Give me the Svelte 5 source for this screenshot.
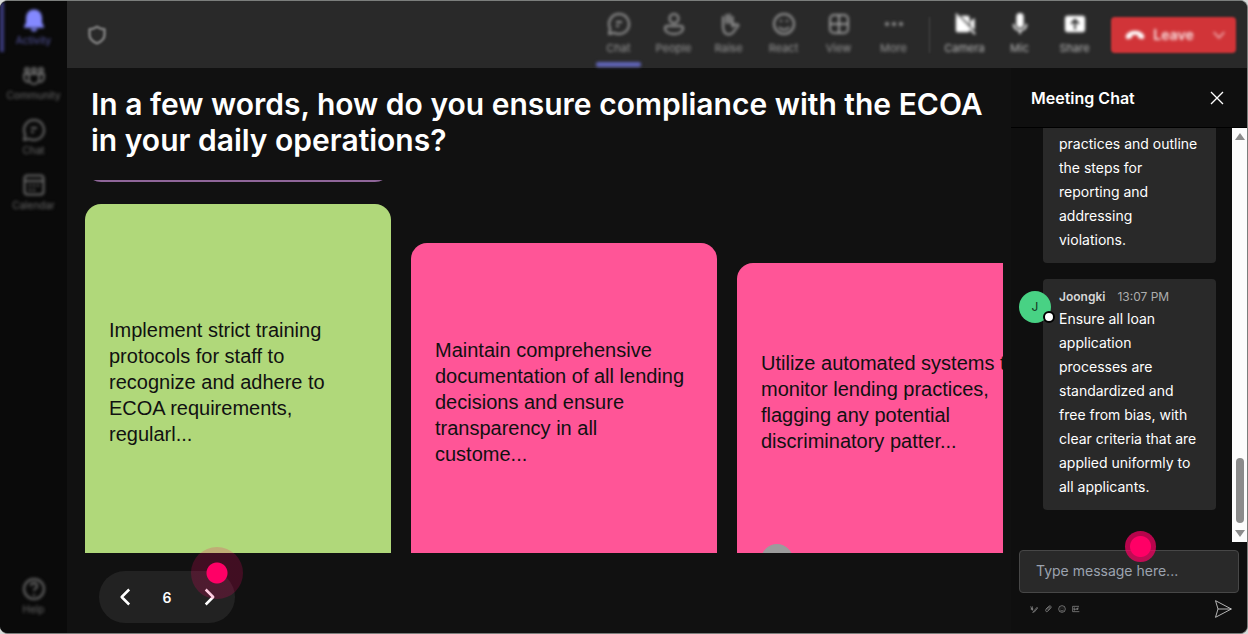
<script>
  const nav = [
    { id: 'bell', label: 'Activity', active: true },
    { id: 'community', label: 'Community' },
    { id: 'chat', label: 'Chat' },
    { id: 'calendar', label: 'Calendar' }
  ];
  const tools = [
    { id: 'chat', label: 'Chat', active: true },
    { id: 'person', label: 'People' },
    { id: 'hand', label: 'Raise' },
    { id: 'smile', label: 'React' },
    { id: 'grid', label: 'View' },
    { id: 'dots', label: 'More' }
  ];
  const devices = [
    { id: 'camera', label: 'Camera' },
    { id: 'mic', label: 'Mic' },
    { id: 'share', label: 'Share' }
  ];
  const columns = [
    {
      offset: 0, previous: true, color: '#b0d87a', height: 356,
      text: 'Implement strict training protocols for staff to recognize and adhere to ECOA requirements, regularl...'
    },
    {
      offset: 63, color: '#ff5597', height: 318,
      text: 'Maintain comprehensive documentation of all lending decisions and ensure transparency in all custome...'
    },
    {
      offset: 83, color: '#ff5597', height: 278,
      text: 'Utilize automated systems to monitor lending practices, flagging any potential discriminatory patter...'
    }
  ];
  let draft = $state('');
</script>

{#snippet icon(id)}
  <svg class="icon" viewBox="0 0 24 24" aria-hidden="true">
    {#if id === 'bell'}
      <path class="solid" d="M12 1.5a8 8 0 0 0-8 8v5l-2 4.2c-.2.6.1 1.1.8 1.1h18.4c.7 0 1-.5.8-1.1l-2-4.2v-5a8 8 0 0 0-8-8zM8.5 20.8a3.6 3.6 0 0 0 7 0z" />
    {:else if id === 'community'}
      <circle cx="12" cy="7" r="2" /><circle cx="5" cy="7" r="2" /><circle cx="19" cy="7" r="2" />
      <path d="M7 11h10v5a5 5 0 0 1-10 0zM7 11H2v4a4 4 0 0 0 5.3 3.5M17 11h5v4a4 4 0 0 1-5.3 3.5" />
    {:else if id === 'chat'}
      <path d="M12 2a10 10 0 1 1-4.7 18.8L2 22l1.2-5.3A10 10 0 0 1 12 2zM9 10h6M9 14h3" />
    {:else if id === 'calendar'}
      <rect x="2.5" y="2.5" width="19" height="19" rx="3" /><path d="M2.5 8h19M7 12.5h2M11 12.5h2M15 12.5h2M7 17h2M11 17h2" />
    {:else if id === 'person'}
      <circle cx="12" cy="6.500" r="4.500" /><path d="M5 14h14a2 2 0 0 1 2 2c0 4-4 6-9 6s-9-2-9-6a2 2 0 0 1 2-2z" />
    {:else if id === 'hand'}
      <path d="M6 15V5M9.500 11V3M12.500 11V2.500M15.500 12V5" stroke-linecap="round" />
      <path d="M6 13c0 6 1 9.500 5.500 9.500 3 0 4.500-1.500 6-4l4-5c-1-2-3-1.500-6 1V10" />
    {:else if id === 'smile'}
      <circle cx="12" cy="12" r="10" /><path d="M7 15c2.500 3.500 7.500 3.500 10 0M8 9h2M14 9h2" />
    {:else if id === 'grid'}
      <rect x="3" y="3" width="18" height="18" rx="4" /><path d="M12 3v18M3 12h18" />
    {:else if id === 'dots'}
      <circle class="solid" cx="5" cy="12" r="2" /><circle class="solid" cx="12" cy="12" r="2" /><circle class="solid" cx="19" cy="12" r="2" />
    {:else if id === 'camera'}
      <path class="solid" d="M3 3l14 14v2a2 2 0 0 1-2 2H4a2 2 0 0 1-2-2V5zM7 3h8a2 2 0 0 1 2 2v8zM18 9l4.500-3.500v13L18 15z" /><path d="M2 1l21 22" />
    {:else if id === 'mic'}
      <rect class="solid" x="8" y="0" width="8" height="16" rx="4" /><path d="M5 12a7 7 0 0 0 14 0M12 19v4" />
    {:else if id === 'share'}
      <path class="solid" fill-rule="evenodd" d="M4 3h16a3 3 0 0 1 3 3v12a3 3 0 0 1-3 3H4a3 3 0 0 1-3-3V6a3 3 0 0 1 3-3zm8 3l-5 5 1.500 1.500 2.500-2.500v8h2v-8l2.500 2.500L17 11z" />
    {:else if id === 'help'}
      <circle cx="12" cy="12" r="10" /><path d="M9 9a3 3 0 1 1 4.500 2.500c-1 .7-1.500 1.200-1.500 2.500M12 17v2" />
    {:else if id === 'shield'}
      <path d="M12 2c3 2 6 3 9 3v7c0 5-4 8-9 10-5-2-9-5-9-10V5c3 0 6-1 9-3z" />
    {:else if id === 'phone'}
      <path class="solid" d="M12 7c5 0 10 2.500 11 6 .5 2-.5 4-2 4l-4-1c-1-.3-1.500-1-1.500-2v-1.500c-2.500-.7-4.500-.7-7 0V14c0 1-.5 1.700-1.500 2l-4 1c-1.500 0-2.500-2-2-4C2 9.500 7 7 12 7z" />
    {:else if id === 'down'}
      <path d="M3 7l9 10 9-10" />
    {:else if id === 'left'}
      <path d="M17 3l-9 9 9 9" />
    {:else if id === 'right'}
      <path d="M8 3l9 9-9 9" />
    {:else if id === 'close'}
      <path d="M3 3l18 18M21 3L3 21" />
    {:else if id === 'format'}
      <path d="M2 4l5 12M7 4v12M2 12h8M10 20L21 7l2 2-10 12-5 1z" />
    {:else if id === 'clip'}
      <path d="M5 13L14 4c5-4 10 1 6 6l-9 9c-4 3-8-1-5-5l8-8c3-2 5 1 3 3l-7 7" />
    {:else if id === 'gif'}
      <path d="M21 4H2v16h20M9 9H6v6h3v-3M12.500 9v6M16 15V9h4M16 12h3" />
    {:else if id === 'send'}
      <path d="M3 2l19 10L3 22l3-10zM6 12h16" />
    {/if}
  </svg>
{/snippet}

<div class="app">
  <nav class="rail" aria-label="Apps">
    {#each nav as item}
      <button class="rail-item" class:active={item.active}>
        {@render icon(item.id)}<span>{item.label}</span>
      </button>
    {/each}
    <button class="rail-item help">{@render icon('help')}<span>Help</span></button>
  </nav>

  <header class="topbar">
    <div class="shield">{@render icon('shield')}</div>
    {#each tools as tool}
      <button class="tool" class:active={tool.active}>{@render icon(tool.id)}<span>{tool.label}</span></button>
    {/each}
    <div class="divider"></div>
    {#each devices as tool}
      <button class="tool device">{@render icon(tool.id)}<span>{tool.label}</span></button>
    {/each}
    <div class="leave">
      <button class="leave-main">{@render icon('phone')}<span>Leave</span></button>
      <button class="leave-more" aria-label="Leave options">{@render icon('down')}</button>
    </div>
  </header>

  <main>
    <h1>In a few words, how do you ensure compliance with the ECOA in your daily operations?</h1>
    <div class="board">
      {#each columns as col}
        <div class="column" style:padding-top="{col.offset}px">
          {#if col.previous}<div class="previous"></div>{/if}
          <article style:background={col.color}>
            <p style:min-height="{col.height}px">{col.text}</p>
            <div class="author"></div>
          </article>
        </div>
      {/each}
    </div>
    <div class="pager">
      <button aria-label="Previous">{@render icon('left')}</button>
      <span>6</span>
      <button aria-label="Next">{@render icon('right')}</button>
      <i class="pulse"></i>
    </div>
  </main>

  <aside>
    <div class="chat-head">
      <h2>Meeting Chat</h2>
      <button aria-label="Close">{@render icon('close')}</button>
    </div>
    <div class="chat-body">
      <div class="messages">
        <div class="message">
          <p>practices and outline the steps for reporting and addressing violations.</p>
        </div>
        <div class="message">
          <div class="avatar">J<i></i></div>
          <div class="meta"><b>Joongki</b><time>13:07 PM</time></div>
          <p>Ensure all loan application processes are standardized and free from bias, with clear criteria that are applied uniformly to all applicants.</p>
        </div>
      </div>
      <div class="scrollbar" aria-hidden="true">
        <i class="up"></i><i class="thumb"></i><i class="down"></i>
      </div>
    </div>
    <div class="composer">
      <input type="text" aria-label="Message" placeholder="Type message here..." bind:value={draft} />
      <i class="pulse small"></i>
      <div class="actions">
        <button aria-label="Format">{@render icon('format')}</button>
        <button aria-label="Attach">{@render icon('clip')}</button>
        <button aria-label="Emoji">{@render icon('smile')}</button>
        <button aria-label="GIF">{@render icon('gif')}</button>
        <button class="send" aria-label="Send">{@render icon('send')}</button>
      </div>
    </div>
  </aside>
</div>

<style>
  :global(body) { background: #d8dad9; }
  * { box-sizing: border-box; }
  button {
    display: flex; align-items: center; justify-content: center;
    padding: 0; border: 0; background: none; color: inherit; font: inherit; cursor: pointer;
  }
  h1, h2, p { margin: 0; }
  .icon { display: block; width: 24px; height: 24px; flex: none; fill: none; stroke: currentColor; stroke-width: 2; stroke-linejoin: round; }
  .icon .solid { fill: currentColor; stroke: none; }

  .app {
    height: 100vh; overflow: hidden; display: grid;
    grid-template: 67px minmax(0, 1fr) / 67px minmax(0, 1fr) 236px;
    border: solid #7b7e7c; border-width: 1px 1px 1px 0; border-radius: 8px;
    background: #111; color: #fff; font-family: Inter, sans-serif;
  }

  .rail {
    grid-row: 1 / 3; display: flex; flex-direction: column; gap: 5px; padding-top: 1px; background: #0a0a0a;
    font-size: 10px; line-height: 14px; color: #6a6a6a;
  }
  .rail-item {
    flex-direction: column; gap: 1px; height: 50px;
    border-left: 4px solid transparent; border-right: 4px solid transparent; filter: blur(1px) blur(1px);
  }
  .rail-item.active { border-left-color: #3b3b7c; color: #5657a3; }
  .rail-item.active .icon { color: #8489ff; }
  .rail-item.help { margin-top: auto; margin-bottom: 12px; }

  .topbar {
    grid-column: 2 / 4; display: flex; align-items: center; padding-right: 11px;
    background: #292929; color: #989898; font-size: 11px; line-height: 14px;
  }
  .shield { margin: 0 auto 0 20px; color: #808080; filter: blur(1px); }
  .shield .icon { width: 20px; height: 20px; stroke-width: 3; }
  .tool { flex-direction: column; align-self: stretch; gap: 5px; width: 55px; padding-bottom: 2px; position: relative; filter: blur(1px) blur(1px); }
  .tool.active::after {
    content: ''; position: absolute; left: 5px; right: 5px; bottom: 1px; height: 5px; border-radius: 2px; background: #6064b8;
  }
  .device { color: #b8b8b8; }
  .device .icon { width: 22px; height: 22px; margin: 1px 0; color: #fff; }
  .divider { width: 1px; height: 36px; margin: 0 7px 0 8px; background: #4a4a4a; filter: blur(1px); }
  .leave { display: flex; width: 125px; height: 36px; margin-left: 9px; border-radius: 4px; background: #d13438; filter: blur(1px); }
  .leave-main, .leave-more { filter: blur(1px); }
  .leave-main { flex: 1; gap: 8px; padding-left: 6px; font-size: 14px; font-weight: 600; color: #fae6e6; }
  .leave-main .icon { width: 20px; height: 20px; color: #fff; }
  .leave-more { width: 34px; color: #eda8aa; }
  .leave-more .icon { width: 14px; height: 14px; stroke-width: 3; }

  main { display: flex; flex-direction: column; align-items: flex-start; padding: 18px 8px 10px 18px; min-width: 0; min-height: 0; }
  h1 { padding: 0 6px; font-size: 30px; font-weight: 600; line-height: 36px; }
  .board {
    flex: 1; align-self: stretch; min-height: 0; overflow: hidden; margin-top: 22px;
    display: grid; grid-template-columns: repeat(3, 306px); column-gap: 20px;
  }
  .previous { height: 16px; margin-top: -14px; margin-bottom: 22px; border-radius: 0 0 16px 16px; background: #8f6699; }
  article {
    border-radius: 16px; padding: 0 24px 16px; color: #111;
    font: 20px/26px "Liberation Sans", Arial, sans-serif;
  }
  article p { display: flex; align-items: center; }
  .author { width: 32px; height: 32px; margin-top: 3px; border-radius: 50%; background: #9c9c9c; }
  .pager {
    position: relative; display: flex; align-items: center; justify-content: space-between;
    width: 136px; height: 52px; margin: 18px 0 0 14px; padding: 0 14px;
    border-radius: 26px; background: #222; font-size: 14px; font-weight: 600;
  }
  .pager button { width: 24px; height: 24px; }
  .pager .icon { width: 20px; height: 20px; stroke-width: 3; }
  .pulse {
    position: absolute; top: -24px; right: -8px; width: 52px; height: 52px; border-radius: 50%;
    background: radial-gradient(circle, #ff0066 10px, rgba(255, 0, 102, 0.2) 11px); pointer-events: none;
  }

  aside { display: flex; flex-direction: column; min-width: 0; min-height: 0; background: #0f0f0f; }
  .chat-head {
    display: flex; align-items: center; justify-content: space-between; flex: none;
    height: 60px; padding: 0 22px 0 20px; border-bottom: 1px solid #000;
  }
  h2 { font-size: 16px; line-height: 24px; font-weight: 600; }
  .chat-head .icon { width: 16px; height: 16px; }
  .chat-body { flex: 1; display: flex; min-height: 0; }
  .messages {
    flex: 1; min-width: 0; overflow: hidden; display: flex; flex-direction: column;
    justify-content: flex-end; gap: 16px; padding: 0 16px 32px 32px;
  }
  .message { position: relative; flex: none; padding: 8px 16px 11px; border-radius: 4px; background: #292929; font-size: 14px; line-height: 24px; }
  .meta { display: flex; gap: 12px; font-size: 12px; line-height: 20px; color: #adadad; }
  .meta b { font-weight: 600; color: #d6d6d6; }
  .avatar {
    position: absolute; left: -24px; top: 12px; width: 32px; height: 32px; border-radius: 50%;
    background: #48d284; color: #143422; font-size: 12px; line-height: 31px; text-align: center;
  }
  .avatar i {
    position: absolute; right: -4px; bottom: 0; width: 12px; height: 12px; border-radius: 50%;
    border: 2px solid #000; background: #fff;
  }
  .scrollbar { display: flex; flex-direction: column; align-items: center; width: 15px; padding: 5px 0; background: #fcfcfc; }
  .scrollbar .up, .scrollbar .down { border: 5px solid transparent; border-top: 0; border-bottom: 7px solid #8b8b8b; }
  .scrollbar .down { border-bottom: 0; border-top: 7px solid #8b8b8b; margin-top: 7px; }
  .scrollbar .thumb { width: 8px; height: 65px; margin-top: auto; border-radius: 4px; background: #8b8b8b; }

  .composer { position: relative; flex: none; padding: 8px 8px 14px; }
  input {
    display: block; width: 100%; height: 43px; padding: 0 16px 3px; border: 1px solid #474747; border-radius: 4px;
    background: #292929; color: #fff; font: 14px/20px Inter, sans-serif;
  }
  input::placeholder { color: #9ca3af; opacity: 1; }
  .pulse.small {
    top: -11px; right: 91px; width: 31px; height: 31px;
    background: radial-gradient(circle, #ff0066 10px, rgba(255, 0, 102, 0.7) 11px);
  }
  .actions { display: flex; align-items: center; gap: 6px; padding: 6px 6px 0 11px; color: #9c9c9c; }
  .actions .icon { width: 8px; height: 8px; }
  .send { margin-left: auto; color: #d6d6d6; }
  .actions .send .icon { width: 20px; height: 20px; stroke-width: 1; }
</style>
